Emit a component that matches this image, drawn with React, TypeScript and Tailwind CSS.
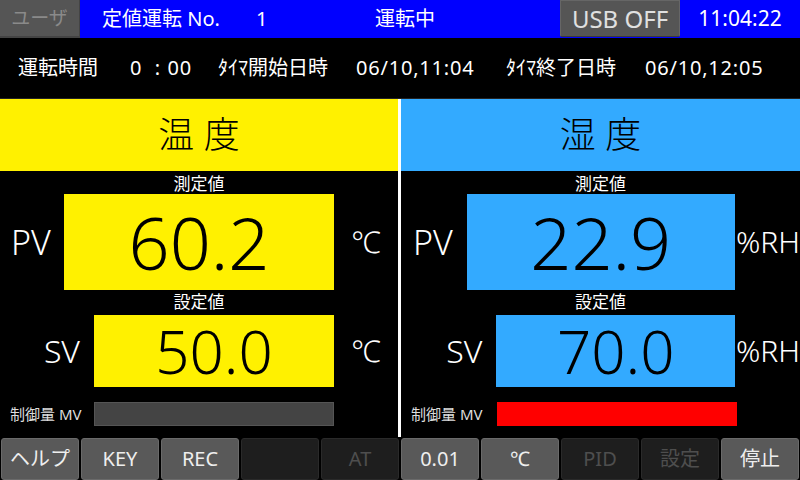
import React from "react";

const font = { fontFamily: '"Noto Sans", "Noto Sans CJK JP", sans-serif' };

type Panel = {
    title: string;
    color: string;
    pv: string;
    sv: string;
    unit: string;
    mv: string;
};

const panels: Panel[] = [
    {title: "温 度", color: "bg-[#fff100]", pv: "60.2", sv: "50.0", unit: "℃", mv: "bg-[#444444]"},
    {title: "湿 度", color: "bg-[#33aaff]", pv: "22.9", sv: "70.0", unit: "%RH", mv: "bg-[#ff0000]"},
];

const buttons = [
    {label: "ヘルプ", on: true},
    {label: "KEY", on: true},
    {label: "REC", on: true},
    {label: "", on: false},
    {label: "AT", on: false},
    {label: "0.01", on: true},
    {label: "℃", on: true},
    {label: "PID", on: false},
    {label: "設定", on: false},
    {label: "停止", on: true},
];

function MeasurePanel({p, right}: {p: Panel; right: boolean}) {
    return (
        <div className="flex flex-col w-[399px] h-full">
            <div className={`${p.color} h-[72px] flex items-center justify-center text-black text-[36px] leading-none font-light`}>
                {p.title}
            </div>
            <div className="h-[23px] flex items-end justify-center text-white text-[17px] leading-none pb-[2px]">
                測定値
            </div>
            <div className="flex h-[96px] items-center">
                <div className={`${right ? "w-[66px]" : "w-[64px]"} text-white text-[34px] leading-none text-center pr-[2px] font-light`}>PV</div>
                <div className={`${p.color} w-[270px] h-full flex items-center justify-center text-black font-light`}>
                    <span className="text-[72px] leading-[72px]">{p.pv}</span>
                </div>
                <div className={`flex-1 text-white leading-none font-light ${right ? "text-[30px] pl-[1px]" : "text-[30px] text-center"}`}>{p.unit}</div>
            </div>
            <div className="h-[23px] flex items-end justify-center text-white text-[17px] leading-none pb-[3px]">
                設定値
            </div>
            <div className="flex h-[72px] items-center mt-[2px]">
                <div className={`${right ? "w-[96px]" : "w-[94px]"} text-white text-[32px] leading-none text-right pr-[14px] font-light`}>SV</div>
                <div className={`${p.color} w-[240px] h-full flex items-center justify-center text-black font-light`}>
                    <span className="text-[60px] leading-[60px]">{p.sv}</span>
                </div>
                <div className={`flex-1 text-white leading-none font-light ${right ? "text-[30px] pl-[1px]" : "text-[30px] text-center"}`}>{p.unit}</div>
            </div>
            <div className="flex h-[24px] items-center mt-[15px]">
                <div className={`${right ? "w-[96px]" : "w-[94px]"} text-[#dddddd] text-[15px] leading-none pl-[10px] whitespace-nowrap`}>制御量 MV</div>
                <div className={`${p.mv} w-[240px] h-full ${right ? "" : "border border-[#555555]"}`}></div>
            </div>
        </div>
    );
}

export default function App() {
    return (
        <div className="w-[800px] h-[480px] bg-black overflow-hidden flex flex-col" style={font}>
            {/* top status bar */}
            <div className="h-[38px] flex items-center bg-[#0000ff] text-white">
                <div className="w-[80px] h-full bg-[#555555] border-b-2 border-r border-[#444444] flex items-center justify-center text-[#8a8a8a] text-[19px]">
                    ユーザ
                </div>
                <div className="w-[176px] pl-[22px] text-[20px] whitespace-nowrap">定値運転 No.</div>
                <div className="w-[119px] text-[20px]">1</div>
                <div className="w-[185px] text-[20px]">運転中</div>
                <div className="w-[120px] h-[37px] self-start bg-[#555555] border border-[#666666] border-b-[#3a3a3a] rounded-b-[2px] flex items-center justify-center text-[#e0e0e0] text-[24px]">
                    USB OFF
                </div>
                <div className="flex-1 text-center text-[21px]">11:04:22</div>
            </div>
            {/* timer row */}
            <div className="h-[62px] flex items-center text-white text-[20px] border-b border-[#222222] whitespace-nowrap">
                <div className="w-[130px] pl-[18px]">運転時間</div>
                <div className="w-[88px] tracking-[1px]">0&nbsp;&nbsp;:&nbsp;00</div>
                <div className="w-[138px]">ﾀｲﾏ開始日時</div>
                <div className="w-[150px] tracking-[0.8px]">06/10,11:04</div>
                <div className="w-[139px]">ﾀｲﾏ終了日時</div>
                <div className="flex-1 tracking-[0.8px]">06/10,12:05</div>
            </div>
            {/* panels */}
            <div className="flex h-[340px]">
                <MeasurePanel p={panels[0]} right={false}/>
                <div className="w-[3px] bg-white"></div>
                <MeasurePanel p={panels[1]} right={true}/>
            </div>
            {/* function keys */}
            <div className="flex-1 flex gap-[2px] px-[1px] pt-[1px]">
                {buttons.map((b, i) => (
                    <div
                        key={i}
                        className={`w-[78px] h-[42px] rounded-[3px] flex items-center justify-center text-[20px] border ${
                            b.on
                                ? "bg-[#595959] border-[#6a6a6a] text-[#eeeeee]"
                                : "bg-[#1e1e1e] border-[#2a2a2a] text-[#4e4e4e]"
                        }`}
                    >
                        {b.label}
                    </div>
                ))}
            </div>
        </div>
    );
}
